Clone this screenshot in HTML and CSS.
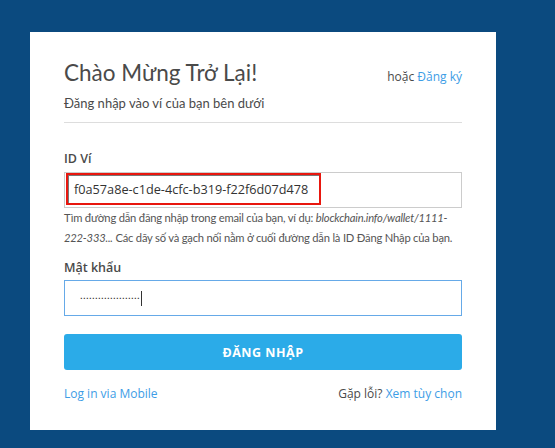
FILE: index.html
```html
<!DOCTYPE html>
<html lang="vi">
  <head>
    <meta charset="UTF-8" />
    <meta name="viewport" content="width=device-width, initial-scale=1.0" />
    <title>Blockchain Wallet - Đăng nhập</title>
    <link rel="stylesheet" href="styles.css">
  </head>
  <body>
    <div class="card">
      <div class="header">
        <h1>Chào Mừng Trở Lại!</h1>
        <span class="alt">hoặc <a href="#">Đăng ký</a></span>
      </div>
      <p class="subtitle">Đăng nhập vào ví của bạn bên dưới</p>

      <label class="field-label">ID Ví</label>
      <div class="input">
        <span class="wallet-id">f0a57a8e-c1de-4cfc-b319-f22f6d07d478</span>
      </div>
      <p class="help">
        Tìm đường dẫn đăng nhập trong email của bạn, ví dụ: <em>blockchain.info/wallet/1111-<wbr>222-333...</em> Các dãy số và gạch nối nằm ở cuối đường dẫn là ID Đăng Nhập của bạn.
      </p>

      <label class="field-label second">Mật khẩu</label>
      <div class="input focused">
        <span class="dots">••••••••••••••••••••</span><span class="caret"></span>
      </div>

      <button class="login">ĐĂNG NHẬP</button>

      <div class="footer">
        <a href="#">Log in via Mobile</a>
        <span>Gặp lỗi? <a href="#">Xem tùy chọn</a></span>
      </div>
    </div>
  </body>
</html>
```

FILE: styles.css
```css
body {
  margin: 0;
  background: #0b4a7f;
  font-family: Lato, "Open Sans", sans-serif;
  color: #4a4a4a;
}

a {
  color: #3d9de6;
  text-decoration: none;
}

.card {
  width: 398px;
  margin: 32px 0 0 30px;
  padding: 28px 34px 28px;
  background: white;
}

.header {
  display: flex;
  justify-content: space-between;
  align-items: baseline;
}

h1 {
  margin: 0;
  font-size: 22.5px;
  font-weight: 400;
  line-height: 26px;
  color: #4a4a4a;
}

.alt {
  font-family: "Open Sans", sans-serif;
  font-size: 12px;
  color: #4a4a4a;
}

.subtitle {
  margin: 8px 0 0;
  padding-bottom: 10px;
  font-size: 13px;
  line-height: 18px;
  border-bottom: 1px solid #ddd;
}

.field-label {
  display: block;
  margin-top: 27px;
  font-family: "Open Sans", sans-serif;
  font-size: 12.5px;
  font-weight: 600;
  line-height: 18px;
  color: #4a4a4a;
}

.field-label.second {
  margin-top: 11px;
}

.input {
  display: flex;
  align-items: center;
  height: 34px;
  margin-top: 4px;
  padding: 0 1px;
  border: 1px solid #ccc;
}

.field-label.second + .input {
  margin-top: 3px;
}

.input.focused {
  border-color: #66aae8;
  padding: 0 15px;
}

.wallet-id {
  align-self: flex-start;
  padding: 3px 11px 3px 6px;
  border: 2px solid #e8170e;
  box-shadow: inset 1px 1px 0 #777;
  font-family: "Open Sans", sans-serif;
  font-size: 12.7px;
  line-height: 22px;
  color: #333;
}

.help {
  margin: 0;
  font-size: 11.2px;
  line-height: 20px;
  letter-spacing: -0.2px;
  color: #555;
}

.help em {
  font-style: italic;
}

.dots {
  font-family: "DejaVu Sans", sans-serif;
  font-size: 4.5px;
  letter-spacing: 0.35px;
  color: #333;
}

.caret {
  width: 1px;
  height: 15px;
  margin-left: 1px;
  background: #333;
}

.login {
  display: block;
  width: 100%;
  height: 36px;
  margin-top: 18px;
  border: none;
  border-radius: 3px;
  background: #2babe8;
  color: white;
  font-family: "Open Sans", sans-serif;
  font-size: 12.5px;
  font-weight: 700;
  letter-spacing: 0.5px;
}

.footer {
  display: flex;
  justify-content: space-between;
  margin-top: 16px;
  font-family: "Open Sans", sans-serif;
  font-size: 12px;
  line-height: 16px;
  color: #4a4a4a;
}
```
